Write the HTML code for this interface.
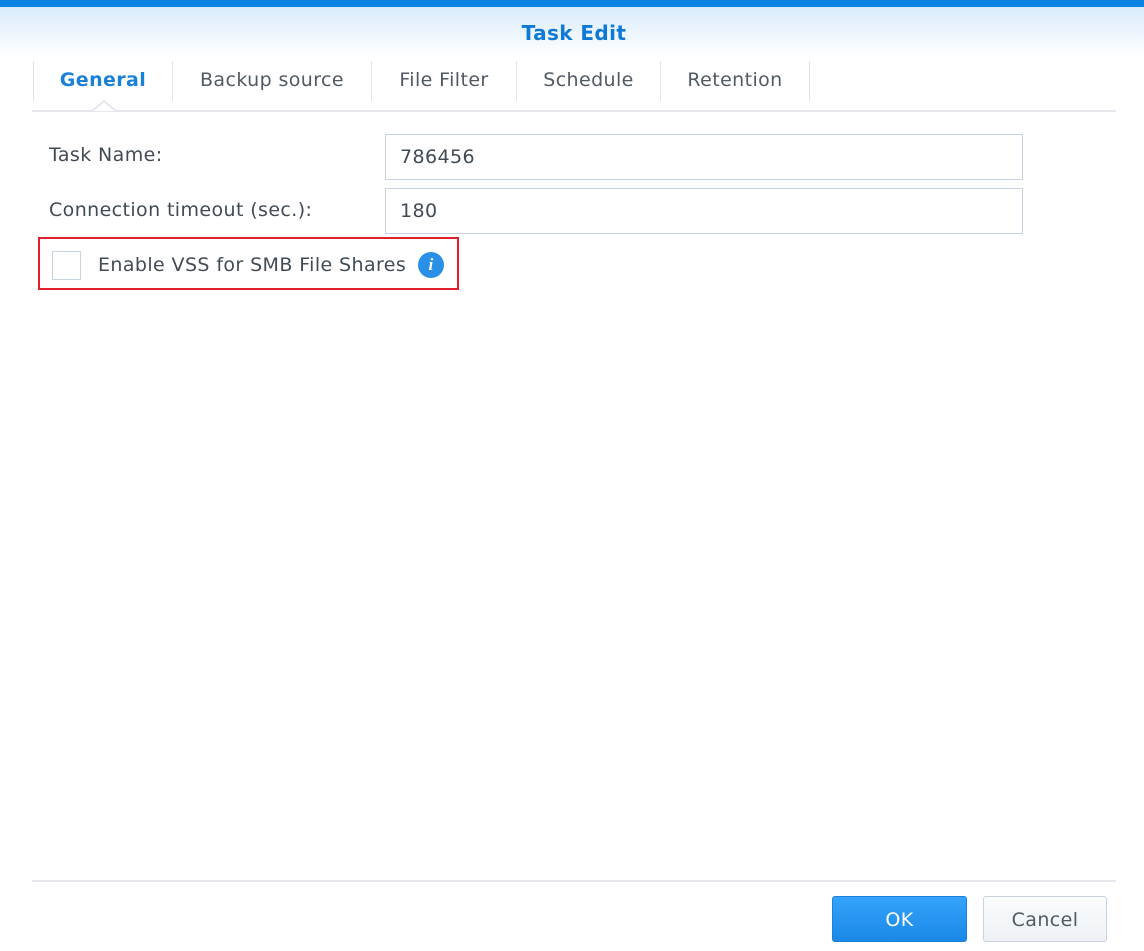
<!DOCTYPE html>
<html><head><meta charset="utf-8"><style>
*{box-sizing:border-box;margin:0;padding:0}
body{width:1144px;height:951px;background:#fff;font-family:"DejaVu Sans","Liberation Sans",sans-serif;position:relative;overflow:hidden;color:#414b55;letter-spacing:0.4px}
.top{position:absolute;left:0;top:0;width:1144px;height:7px;background:#0a84e0}
.hdr{position:absolute;left:0;top:7px;width:1144px;height:50px;background:linear-gradient(#d9ebfb,#fff)}
.title{position:absolute;left:0;width:1148px;top:21px;text-align:center;font-weight:bold;font-size:20px;color:#0e7ad6}
.tab{position:absolute;top:61px;height:40px;line-height:38px;font-size:19px;text-align:center;color:#505a64}
.sep{position:absolute;top:61px;width:1px;height:40px;background:#dde3ea}
.ul{position:absolute;left:32px;top:110px;width:1084px;height:2px;background:#e4e8ec}
.lbl{position:absolute;left:49px;font-size:19px;color:#414b55}
.inp{position:absolute;left:385px;width:638px;height:46px;border:1px solid #c8d3de;padding-left:14px;line-height:45px;font-size:19px;color:#414b55}
.red{position:absolute;left:38px;top:237px;width:421px;height:53px;border:2px solid #e0202b}
.cb{position:absolute;left:52px;top:251px;width:29px;height:29px;border:1px solid #c8d3de}
.info{position:absolute;left:418px;top:252px;width:26px;height:26px;border-radius:50%;background:#2a8fe6;color:#fff;font:italic bold 17px "Liberation Serif",serif;text-align:center;line-height:26px}
.btn{position:absolute;top:896px;height:46px;border-radius:3px;font-size:19px;text-align:center;line-height:46px}
</style></head><body>
<div class="top"></div><div class="hdr"></div>
<div class="title">Task Edit</div>
<div class="sep" style="left:33px"></div>
<div class="tab" style="left:34px;width:138px;color:#1b80d8;font-weight:bold">General</div>
<div class="sep" style="left:172px"></div>
<div class="tab" style="left:173px;width:198px">Backup source</div>
<div class="sep" style="left:371px"></div>
<div class="tab" style="left:372px;width:144px">File Filter</div>
<div class="sep" style="left:516px"></div>
<div class="tab" style="left:517px;width:143px">Schedule</div>
<div class="sep" style="left:660px"></div>
<div class="tab" style="left:661px;width:148px">Retention</div>
<div class="sep" style="left:809px"></div>
<div class="ul"></div>
<svg style="position:absolute;left:92px;top:99px" width="24" height="14"><path d="M0 12 L12 2 L24 12" fill="#fff" stroke="#e4e8ec" stroke-width="2"/></svg>
<div class="lbl" style="top:144px">Task Name:</div>
<div class="inp" style="top:134px">786456</div>
<div class="lbl" style="top:199px">Connection timeout (sec.):</div>
<div class="inp" style="top:188px">180</div>
<div class="red"></div><div class="cb"></div>
<div class="lbl" style="left:98px;top:254px">Enable VSS for SMB File Shares</div>
<div class="info">i</div>
<div style="position:absolute;left:32px;top:880px;width:1084px;height:2px;background:#e4e8ec"></div>
<div class="btn" style="left:832px;width:135px;background:linear-gradient(#34a3fb,#1a88e6);border:1px solid #1a80d8;color:#fff">OK</div>
<div class="btn" style="left:983px;width:124px;background:linear-gradient(#fafcfd,#eef2f6);border:1px solid #c8d3de;color:#505a64">Cancel</div>
</body></html>
